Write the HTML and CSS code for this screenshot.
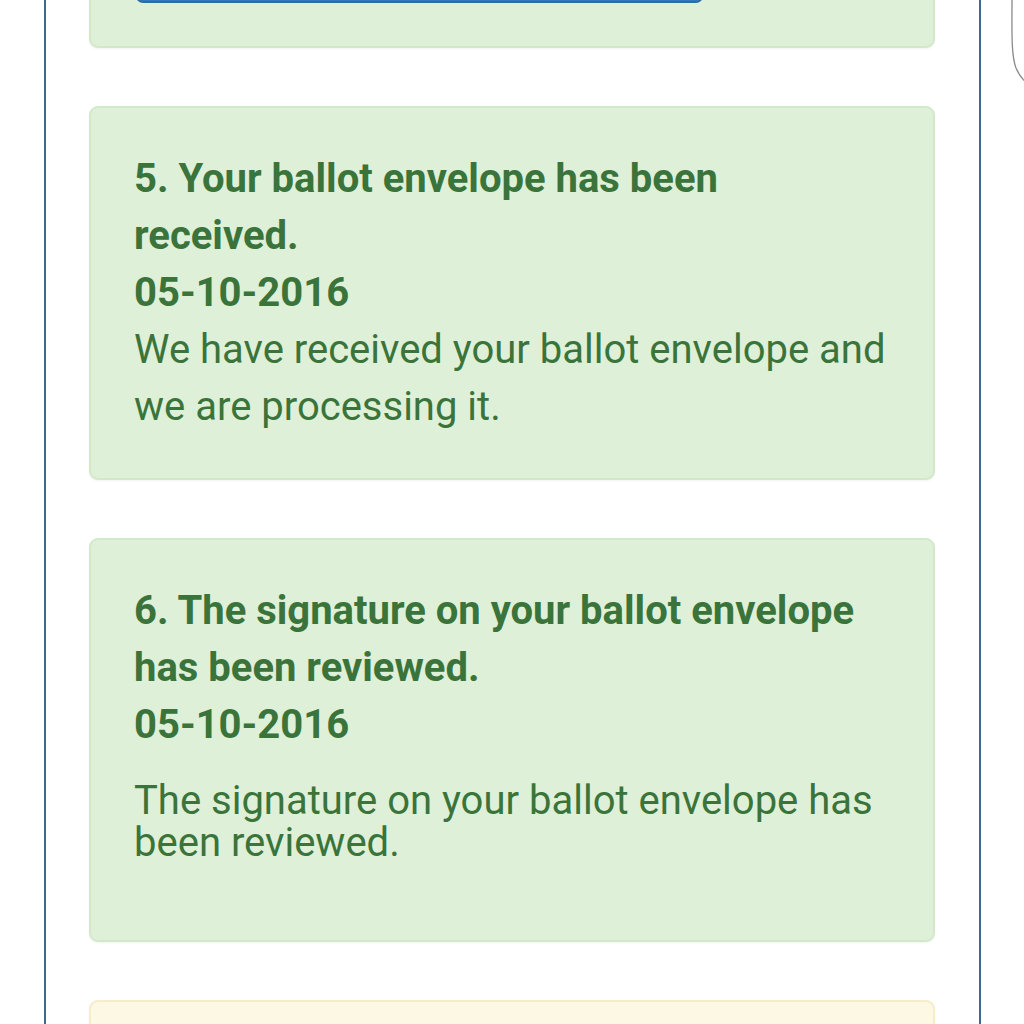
FILE: index.html
```html
<!DOCTYPE html>
<html lang="en">
<head>
<meta charset="utf-8">
<title>Ballot status</title>
<link rel="stylesheet" href="styles.css">
</head>
<body>
<div class="page">
  <div class="frame">
    <div class="card card-success card-first">
      <div class="btn-primary"></div>
    </div>
    <div class="card card-success">
      <div class="title">5. Your ballot envelope has been received.</div>
      <div class="title">05-10-2016</div>
      <div class="body">We have received your ballot envelope and we are processing it.</div>
    </div>
    <div class="card card-success">
      <div class="title">6. The signature on your ballot envelope has been reviewed.</div>
      <div class="title">05-10-2016</div>
      <p class="body tight">The signature on your ballot envelope has been reviewed.</p>
    </div>
    <div class="card card-warning"></div>
  </div>
  <svg class="edge" width="20" height="100" viewBox="0 0 20 100"><path d="M2 0 C2 30 1 55 6 68 C9 75 12 79 16 82" fill="none" stroke="#8a8a8a" stroke-width="1.3"/></svg>
</div>
</body>
</html>
```
FILE: styles.css
```css
html, body {
  margin: 0;
  padding: 0;
  background: #ffffff;
}
.page {
  position: relative;
  width: 1024px;
  height: 1024px;
  overflow: hidden;
  font-family: Roboto, "Liberation Sans", sans-serif;
  color: #3a743b;
}
.frame {
  margin-left: 44px;
  border-left: 2px solid #3a6a8e;
  border-right: 2px solid #3a6a8e;
  padding: 0 44px 0 43px;
  height: 1200px;
  display: flex;
  flex-direction: column;
  gap: 58px;
  box-sizing: border-box;
  width: 937px;
}
.card {
  border: 2px solid #d2e8c8;
  border-radius: 9px;
  background: #dff0d8;
  padding: 41.5px 44px 43.5px 43px;
  box-shadow: 0 1px 2px rgba(0,0,0,0.05);
}
.card-first {
  margin-top: -19px;
  padding: 0 44px 43px 45px;
}
.card-warning {
  background: #fcf8e3;
  border-color: #f6ecc8;
  min-height: 120px;
}
.btn-primary {
  box-sizing: border-box;
  width: 567px;
  height: 20px;
  background: #337ab7;
  border: 2px solid #2e6da4;
  border-top: none;
  border-radius: 0 0 7px 7px;
}
.title {
  font-size: 40px;
  line-height: 57px;
  font-weight: 700;
}
.body {
  font-size: 40px;
  line-height: 57px;
  font-weight: 400;
}
.body.tight {
  line-height: 42px;
  margin: 27.5px 0 32px 0;
}
.edge {
  position: absolute;
  top: 0;
  left: 1010px;
}
```
